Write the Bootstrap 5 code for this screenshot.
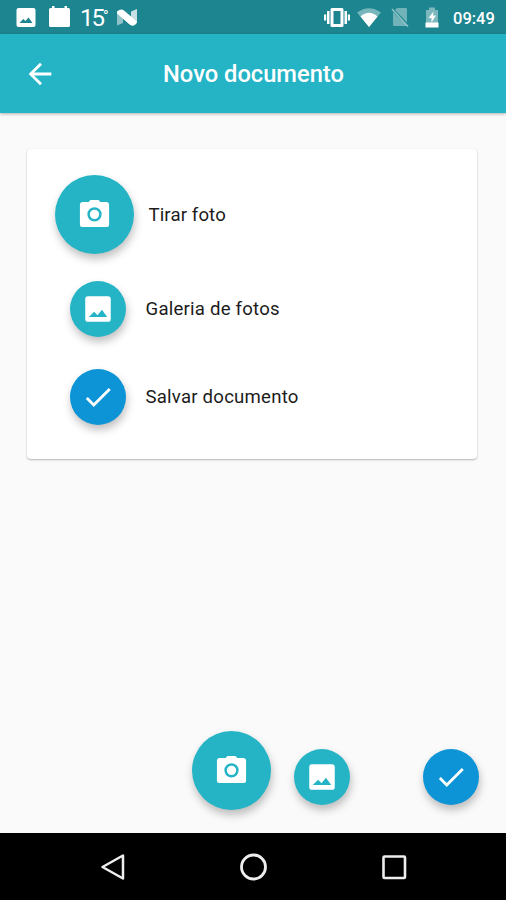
<!DOCTYPE html>
<html lang="pt-BR">
<head>
<meta charset="utf-8">
<meta name="viewport" content="width=device-width, initial-scale=1">
<title>Novo documento</title>
<link href="https://cdn.jsdelivr.net/npm/bootstrap@5.3.0/dist/css/bootstrap.min.css" rel="stylesheet">
<style>
  body { font-family: Roboto, "Liberation Sans", sans-serif; background: #fafafa; overflow: hidden; }
  svg { display: block; flex: none; }
  .status-bar { height: 34px; background: #1c8590; padding: 0 10px 0 16px; }
  .temp { font-size: 24px; font-weight: 400; letter-spacing: -2px; line-height: 34px; width: 25px; margin-left: 2px; white-space: nowrap; }
  .temp span { font-size: 15px; vertical-align: 5px; }
  .ico-calendar { margin-left: 8px; }
  .ico-n { margin-left: 11px; }
  .ico-wifi { margin-left: 5px; }
  .ico-sim { margin-left: 8px; }
  .ico-battery { margin-left: 14px; }
  .clock { font-size: 16.5px; font-weight: 500; line-height: 34px; padding-top: 3px; width: 43px; margin-left: 13px; white-space: nowrap; }
  .app-bar { height: 79px; background: #24b4c6; padding: 0 23px; box-shadow: 0 1px 3px rgba(0,0,0,.3); z-index: 1; }
  .app-title { font-size: 23.7px; font-weight: 500; line-height: 79px; margin-right: 33px; padding-top: 1px; }
  .sheet { margin: 36px 29px 0 27px; height: 310px; padding: 26px 28px; background: #fff; border-radius: 4px; box-shadow: 0 1px 2px rgba(0,0,0,.27), 0 0 1px rgba(0,0,0,.1); }
  .fab { width: 56px; height: 56px; border-radius: 50%; background: #24b4c6; box-shadow: 1px 5px 8px rgba(0,0,0,.25); flex: none; color: #fff; }
  .fab-lg { width: 79px; height: 79px; }
  .fab-blue { background: #0c94d6; }
  .fab-inset { margin-left: 14.5px; }
  .action-label { font-size: 18.6px; color: #1c1c1c; letter-spacing: .22px; line-height: 24px; margin-left: 20px; white-space: nowrap; }
  .label-lg { margin-left: 14.5px; letter-spacing: .12px; }
  .gap-photo { margin-top: 26.6px; }
  .gap-save { margin-top: 32.5px; }
  .fab-row { padding: 0 27.5px 23px 191.5px; }
  .fab-row .fab:not(.fab-lg) { margin-bottom: 5.3px; }
  .fab-next { margin-left: 23.7px; }
  .nav-bar { height: 67px; background: #000; padding: 0 97px 0 99px; }
</style>
</head>
<body>
<svg class="d-none" xmlns="http://www.w3.org/2000/svg">
  <symbol id="lens" viewBox="0 0 24 24"><path fill="currentColor" fill-rule="evenodd" d="M9.200 2 8 3.400H4a2 2 0 0 0-2 2V19a1.500 1.500 0 0 0 1.500 1.500h17A1.500 1.500 0 0 0 22 19V5.400a2 2 0 0 0-2-2h-4L14.800 2zM12 7a4.900 4.900 0 1 1 0 9.800A4.900 4.900 0 0 1 12 7zm0 1.700a3.200 3.200 0 1 0 0 6.400 3.200 3.200 0 0 0 0-6.400z"/></symbol>
  <symbol id="image" viewBox="0 0 24 24"><path fill="currentColor" fill-rule="evenodd" d="M5 3h14a2 2 0 0 1 2 2v14a2 2 0 0 1-2 2H5a2 2 0 0 1-2-2V5a2 2 0 0 1 2-2zM5.500 17.700h13l-3.700-5.200-3.200 3.900-2.300-2.500z"/></symbol>
  <symbol id="check" viewBox="0 0 24 24"><path fill="currentColor" d="M9 16.170 4.830 12l-1.420 1.410L9 19 21 7l-1.410-1.410z"/></symbol>
</svg>

<div class="vh-100 d-flex flex-column">
  <div class="status-bar d-flex align-items-center text-white">
    <svg width="20" height="34" viewBox="0 0 20 34" fill="#fff"><path fill-rule="evenodd" d="M2.500 8h15a2 2 0 0 1 2 2v15a2 2 0 0 1-2 2h-15a2 2 0 0 1-2-2V10a2 2 0 0 1 2-2zM3.500 23h13l-4-5.500-3 3.500-2.300-2z"/></svg>
    <svg class="ico-calendar" width="34" height="34" viewBox="0 0 34 34" fill="#fff"><path d="M6.500 8H8V6h2.500v2h10V6H23v2h1.500a1.500 1.500 0 0 1 1.500 1.500v16a1.500 1.500 0 0 1-1.500 1.500h-18A1.500 1.500 0 0 1 5 25.500v-16A1.500 1.500 0 0 1 6.500 8z"/></svg>
    <div class="temp">15<span>°</span></div>
    <svg class="ico-n" width="22" height="34" viewBox="0 0 22 34" fill="#fff"><path opacity=".5" d="M1 12.500 7 16v7l-6 2.500z"/><path opacity=".75" d="M15 11.500 21 9v13l-6-5z"/><path d="M1 11.500Q5 8 8 10.500L21 21.500q0 3-4 4.200-2 .3-4-1.700L1 13.500z"/></svg>

    <svg class="ms-auto" width="28" height="34" viewBox="0 0 28 34" fill="#fff"><path fill-rule="evenodd" d="M9 8h10a1.500 1.500 0 0 1 1.500 1.500v16A1.500 1.500 0 0 1 19 27H9a1.500 1.500 0 0 1-1.500-1.500v-16A1.500 1.500 0 0 1 9 8zm1.500 3v13h7V11z"/><path d="M4 11h2.500v13H4zM1 14.500h2.200v6H1zM21.500 11H24v13h-2.500zM24.800 14.500H27v6h-2.200z"/></svg>
    <svg class="ico-wifi" width="26" height="34" viewBox="0 0 26 34" fill="#fff"><path opacity=".4" d="M1 12.500Q13 4 25 12.500L13 27z"/><path d="M4.500 16.500q8.500-7.500 17 0L13 27z"/></svg>
    <svg class="ico-sim" width="20" height="34" viewBox="0 0 20 34"><path fill="#fff" opacity=".38" d="M7 8h9a1 1 0 0 1 1 1v13.500L5 10zM3 12l14 14H4a1 1 0 0 1-1-1z"/><path stroke="#fff" stroke-width="1.600" opacity=".5" d="m2 9 16 17.500"/></svg>
    <svg class="ico-battery" width="16" height="34" viewBox="0 0 16 34" fill="#fff"><path opacity=".42" d="M2 10h3V7.500h6V10h3v17H2z"/><path d="M1.500 22.500h13v5h-13zM9.500 11.500 4.500 18h3v4.500l4.500-7H9z"/></svg>
    <div class="clock">09:49</div>
  </div>

  <header class="app-bar d-flex align-items-center text-white">
    <svg width="34" height="34" viewBox="0 0 24 24" fill="#fff"><path d="M20 11H7.830l5.590-5.590L12 4l-8 8 8 8 1.410-1.410L7.830 13H20z"/></svg>
    <h1 class="app-title flex-grow-1 text-center mb-0">Novo documento</h1>
  </header>

  <main class="flex-grow-1 d-flex flex-column">
    <section class="sheet">
      <div class="d-flex align-items-center">
        <div class="fab fab-lg d-flex align-items-center justify-content-center"><svg width="35" height="35"><use href="#lens"/></svg></div>
        <div class="action-label label-lg">Tirar foto</div>
      </div>
      <div class="gap-photo d-flex align-items-center">
        <div class="fab fab-inset d-flex align-items-center justify-content-center"><svg width="34" height="34"><use href="#image"/></svg></div>
        <div class="action-label">Galeria de fotos</div>
      </div>
      <div class="gap-save d-flex align-items-center">
        <div class="fab fab-inset fab-blue d-flex align-items-center justify-content-center"><svg width="34" height="34"><use href="#check"/></svg></div>
        <div class="action-label">Salvar documento</div>
      </div>
    </section>

    <div class="fab-row mt-auto d-flex align-items-end">
      <div class="fab fab-lg d-flex align-items-center justify-content-center"><svg width="35" height="35"><use href="#lens"/></svg></div>
      <div class="fab fab-next d-flex align-items-center justify-content-center"><svg width="34" height="34"><use href="#image"/></svg></div>
      <div class="fab fab-blue ms-auto d-flex align-items-center justify-content-center"><svg width="34" height="34"><use href="#check"/></svg></div>
    </div>
  </main>

  <nav class="nav-bar d-flex align-items-center justify-content-between">
    <svg width="30" height="30" viewBox="0 0 30 30" fill="none" stroke="#eee" stroke-width="2.500" stroke-linejoin="round"><path d="M24 3.500v23L3.500 15z"/></svg>
    <svg width="30" height="30" viewBox="0 0 30 30" fill="none" stroke="#eee" stroke-width="2.800"><circle cx="14.500" cy="15" r="12"/></svg>
    <svg width="30" height="30" viewBox="0 0 30 30" fill="none" stroke="#eee" stroke-width="2.600"><rect x="4.500" y="4.500" width="21.500" height="21.500" rx="1"/></svg>
  </nav>
</div>
<script src="https://cdn.jsdelivr.net/npm/bootstrap@5.3.0/dist/js/bootstrap.bundle.min.js"></script>
</body>
</html>
